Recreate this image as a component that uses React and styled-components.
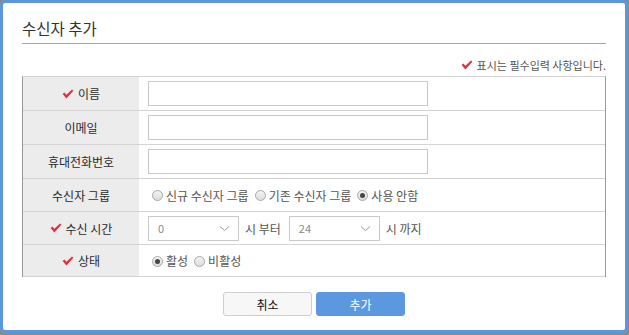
import React from "react";
import styled, { createGlobalStyle } from "styled-components";

const Global = createGlobalStyle`
  html, body { margin: 0; padding: 0; background: #8a8a8a; }
  body { font-family: "Noto Sans CJK KR", "Noto Sans", sans-serif; }
  * { box-sizing: border-box; }
`;

const Modal = styled.div`
  width: 628px;
  height: 333px;
  background: #fff;
  border: 3px solid #5b96de;
  border-radius: 5px;
  padding: 10px 19px 0 19px;
  display: flex;
  flex-direction: column;
`;

const Title = styled.h2`
  margin: 0;
  font-size: 15.5px;
  font-weight: 400;
  color: #333;
  line-height: 22px;
  height: 31px;
  padding-top: 4px;
  border-bottom: 1px solid #a3a7ab;
`;

const Note = styled.div`
  display: flex;
  justify-content: flex-end;
  align-items: center;
  gap: 4px;
  font-size: 11px;
  color: #555;
  height: 32px;
  padding-top: 10px;
`;

const Table = styled.div`
  display: flex;
  flex-direction: column;
  border-top: 1px solid #d3d3d3;
  border-left: 1px solid #999;
  border-right: 1px solid #999;
`;

const Row = styled.div`
  display: flex;
  height: ${(p) => p.h}px;
  border-bottom: 1px solid #d3d3d3;
`;

const Label = styled.div`
  width: 116px;
  flex: none;
  background: #ececec;
  display: flex;
  align-items: center;
  justify-content: center;
  gap: 4px;
  font-size: 12px;
  color: #2a2a2a;
`;

const Cell = styled.div`
  flex: 1;
  display: flex;
  align-items: center;
  padding-left: ${(p) => (p.radios ? 13 : 9)}px;
  gap: ${(p) => (p.radios ? 0 : 6)}px;
  font-size: 12px;
  color: #555;
`;

const Input = styled.input`
  width: 280px;
  height: 25px;
  border: 1px solid #c9c9c9;
  outline: none;
  margin: 0;
  padding: 0 6px;
`;

const Select = styled.div`
  width: 91px;
  height: 25px;
  border: 1px solid #c9c9c9;
  display: flex;
  align-items: center;
  justify-content: space-between;
  padding: 0 8px 0 9px;
  font-size: 11px;
  color: #888;
`;

const Unit = styled.span`
  color: #555;
  font-size: 12px;
  margin-right: ${(p) => p.mr || 0}px;
`;

const RadioItem = styled.label`
  display: flex;
  align-items: center;
  gap: 3px;
  margin-right: 6px;
  color: #555;
  font-size: 12px;
`;

const RadioDot = styled.span`
  width: 11px;
  height: 11px;
  border-radius: 50%;
  border: 1px solid #a8a8a8;
  background: linear-gradient(#f4f4f4, #dcdcdc);
  display: inline-flex;
  align-items: center;
  justify-content: center;
  margin-top: 1px;
  &::after {
    content: "";
    width: 5px;
    height: 5px;
    border-radius: 50%;
    background: ${(p) => (p.checked ? "#444" : "transparent")};
  }
`;

const Buttons = styled.div`
  display: flex;
  justify-content: center;
  gap: 4px;
  margin-top: 15px;
`;

const Button = styled.button`
  width: 89px;
  height: 24px;
  border-radius: 3px;
  font-family: inherit;
  font-size: 12px;
  border: 1px solid ${(p) => (p.primary ? "#5b98e0" : "#cfcfcf")};
  background: ${(p) => (p.primary ? "#5b98e0" : "#f7f7f7")};
  color: ${(p) => (p.primary ? "#fff" : "#111")};
  padding: 0;
`;

const Check = () => (
  <svg width="12" height="10" viewBox="0 0 12 10">
    <path d="M0.6 5 L2.4 3.6 L4.4 5.8 L10 0.4 L11.4 1.8 L4.4 9.4 Z" fill="#e0323c" />
  </svg>
);

const Chevron = () => (
  <svg width="11" height="7" viewBox="0 0 11 7">
    <path d="M1 1.5 L5.5 5.5 L10 1.5" fill="none" stroke="#999" strokeWidth="1" />
  </svg>
);

const Radio = ({ checked, children }) => (
  <RadioItem>
    <RadioDot checked={checked} />
    {children}
  </RadioItem>
);

export default function App() {
  return (
    <>
      <Global />
      <Modal>
        <Title>수신자 추가</Title>
        <Note>
          <Check />
          표시는 필수입력 사항입니다.
        </Note>
        <Table>
          <Row h={34}>
            <Label><Check />이름</Label>
            <Cell><Input /></Cell>
          </Row>
          <Row h={34}>
            <Label>이메일</Label>
            <Cell><Input /></Cell>
          </Row>
          <Row h={34}>
            <Label>휴대전화번호</Label>
            <Cell><Input /></Cell>
          </Row>
          <Row h={33}>
            <Label>수신자 그룹</Label>
            <Cell radios>
              <Radio>신규 수신자 그룹</Radio>
              <Radio>기존 수신자 그룹</Radio>
              <Radio checked>사용 안함</Radio>
            </Cell>
          </Row>
          <Row h={33}>
            <Label><Check />수신 시간</Label>
            <Cell>
              <Select>0<Chevron /></Select>
              <Unit mr={2}>시 부터</Unit>
              <Select>24<Chevron /></Select>
              <Unit>시 까지</Unit>
            </Cell>
          </Row>
          <Row h={32}>
            <Label><Check />상태</Label>
            <Cell radios>
              <Radio checked>활성</Radio>
              <Radio>비활성</Radio>
            </Cell>
          </Row>
        </Table>
        <Buttons>
          <Button>취소</Button>
          <Button primary>추가</Button>
        </Buttons>
      </Modal>
    </>
  );
}
